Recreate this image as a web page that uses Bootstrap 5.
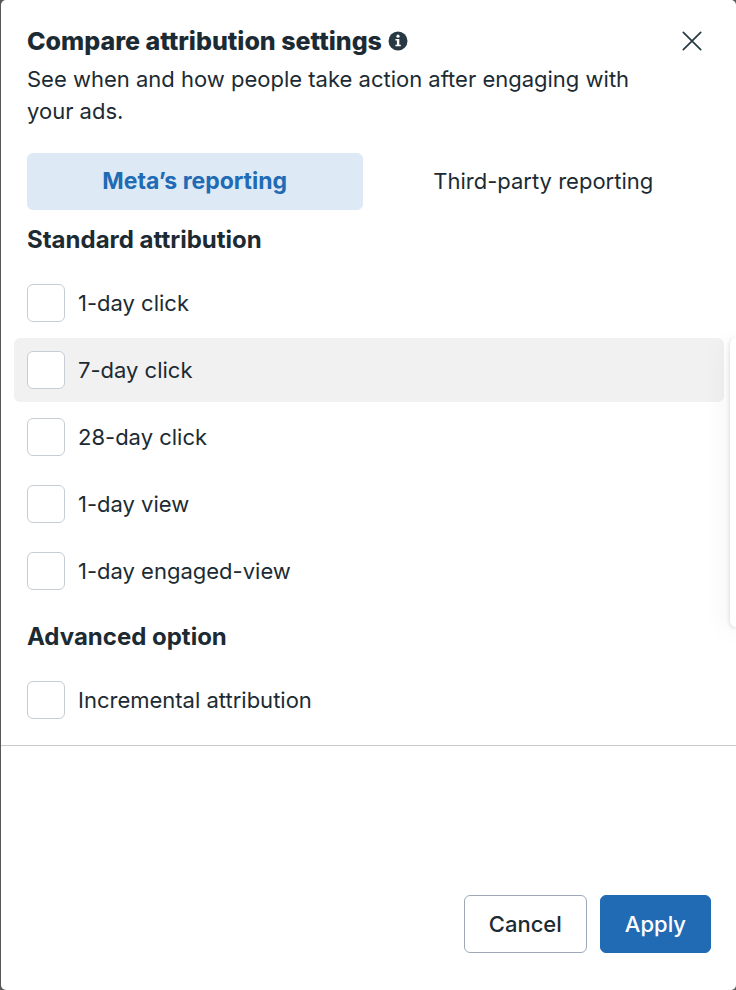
<!DOCTYPE html>
<html lang="en">
<head>
<meta charset="utf-8">
<meta name="viewport" content="width=device-width, initial-scale=1">
<title>Compare attribution settings</title>
<link href="https://cdn.jsdelivr.net/npm/bootstrap@5.3.0/dist/css/bootstrap.min.css" rel="stylesheet">
<style>
  body { background: #58585a; color: #1c2b33; font-family: Inter, "Noto Sans", sans-serif; font-size: 22px; line-height: 32px; }
  .dialog { margin-left: 1px; border-radius: 5px; }
  .dialog-main { padding: 25px 12px 13px 13px; border-bottom: 1px solid #c8cacd; }
  .inset { padding: 0 13px; }
  .dialog-title { font-size: 25px; line-height: 32px; gap: 6px; font-weight: 800; }
  .dialog-text { margin-top: 6px; }
  .section { margin-top: 14px; }
  .section + .section { margin-top: 18px; }
  .section-title { font-size: 24px; line-height: 32px; }
  .close-btn { width: 38px; height: 32px; color: #283943; }
  .tabs { gap: 13px; margin-top: 26px; }
  .tabs .btn { --bs-btn-font-size: 22px; --bs-btn-line-height: 33px; --bs-btn-padding-y: 11px; --bs-btn-color: #1c2b33; --bs-btn-border-radius: 6px; --bs-btn-active-bg: #dde9f5; --bs-btn-active-color: #216bb5; --bs-btn-active-border-color: #dde9f5; }
  .tabs .btn.active { --bs-btn-font-size: 23px; }
  .options { gap: 3px; margin-top: 15px; }
  .option { padding: 13px; gap: 13px; border-radius: 6px; }
  .option.hovered { background: #f1f1f1; }
  .option .form-check-input { width: 38px; height: 38px; border: 1px solid #c6cdd6; border-radius: 6px; }
  .dialog-actions { padding: 37px 25px; gap: 13px; }
  .dialog-actions .btn { --bs-btn-font-size: 22px; --bs-btn-line-height: 32px; --bs-btn-padding-y: 12px; --bs-btn-padding-x: 24px; --bs-btn-border-radius: 6px; --bs-btn-font-weight: 500; }
  .btn-cancel { --bs-btn-color: #1c2b33; --bs-btn-border-color: #9da9b7; --bs-btn-bg: #fff; }
  .btn-apply { --bs-btn-color: #fff; --bs-btn-bg: #216bb5; --bs-btn-border-color: #216bb5; }
  .side-panel { top: 338px; right: 0; width: 6px; height: 289px; background: #fff; border-radius: 6px 0 0 6px; box-shadow: 0 4px 26px rgba(0,0,0,.14), 0 1px 4px rgba(0,0,0,.16); }
</style>
</head>
<body>
<div class="position-relative overflow-hidden min-vh-100 d-flex flex-column">
  <main class="dialog bg-white flex-grow-1 d-flex flex-column">
    <div class="dialog-main">
      <header class="inset d-flex align-items-start">
        <div class="flex-grow-1">
          <h1 class="dialog-title mb-0 d-flex align-items-center">Compare attribution settings
            <svg width="20" height="20" viewBox="0 0 20 20" role="img" aria-label="Information"><circle cx="10" cy="10" r="9.5" fill="#283943"/><circle cx="10" cy="5.2" r="1.6" fill="#fff"/><path d="M7.4 8.1h3.9v5.7h1.5v1.5H7.4v-1.5h1.5V9.6H7.4z" fill="#fff"/></svg>
          </h1>
          <p class="dialog-text mb-0">See when and how people take action after engaging with your ads.</p>
        </div>
        <button type="button" class="close-btn btn p-0 border-0 flex-shrink-0 d-flex align-items-center justify-content-center" aria-label="Close">
          <svg width="20" height="20" viewBox="0 0 20 20" fill="none" stroke="currentColor" stroke-width="1.7" stroke-linecap="round"><path d="M1.3 1.3l17.4 17.4M18.7 1.3L1.3 18.7"/></svg>
        </button>
      </header>
      <div class="inset">
        <div class="tabs d-flex" role="tablist">
          <button type="button" class="btn active fw-bold col" role="tab" aria-selected="true">Meta’s reporting</button>
          <button type="button" class="btn col" role="tab" aria-selected="false">Third-party reporting</button>
        </div>
      </div>
      <section class="section">
        <h2 class="section-title inset fw-bold mb-0">Standard attribution</h2>
        <div class="options d-flex flex-column">
          <label class="option d-flex align-items-center" for="c1"><input class="form-check-input m-0" type="checkbox" id="c1">1-day click</label>
          <label class="option hovered d-flex align-items-center" for="c7"><input class="form-check-input m-0" type="checkbox" id="c7">7-day click</label>
          <label class="option d-flex align-items-center" for="c28"><input class="form-check-input m-0" type="checkbox" id="c28">28-day click</label>
          <label class="option d-flex align-items-center" for="v1"><input class="form-check-input m-0" type="checkbox" id="v1">1-day view</label>
          <label class="option d-flex align-items-center" for="e1"><input class="form-check-input m-0" type="checkbox" id="e1">1-day engaged-view</label>
        </div>
      </section>
      <section class="section">
        <h2 class="section-title inset fw-bold mb-0">Advanced option</h2>
        <div class="options d-flex flex-column">
          <label class="option d-flex align-items-center" for="inc"><input class="form-check-input m-0" type="checkbox" id="inc">Incremental attribution</label>
        </div>
      </section>
    </div>
    <footer class="dialog-actions d-flex justify-content-end mt-auto">
      <button type="button" class="btn btn-cancel">Cancel</button>
      <button type="button" class="btn btn-apply">Apply</button>
    </footer>
  </main>
  <aside class="side-panel position-absolute" aria-hidden="true"></aside>
</div>
<script src="https://cdn.jsdelivr.net/npm/bootstrap@5.3.0/dist/js/bootstrap.bundle.min.js"></script>
</body>
</html>
